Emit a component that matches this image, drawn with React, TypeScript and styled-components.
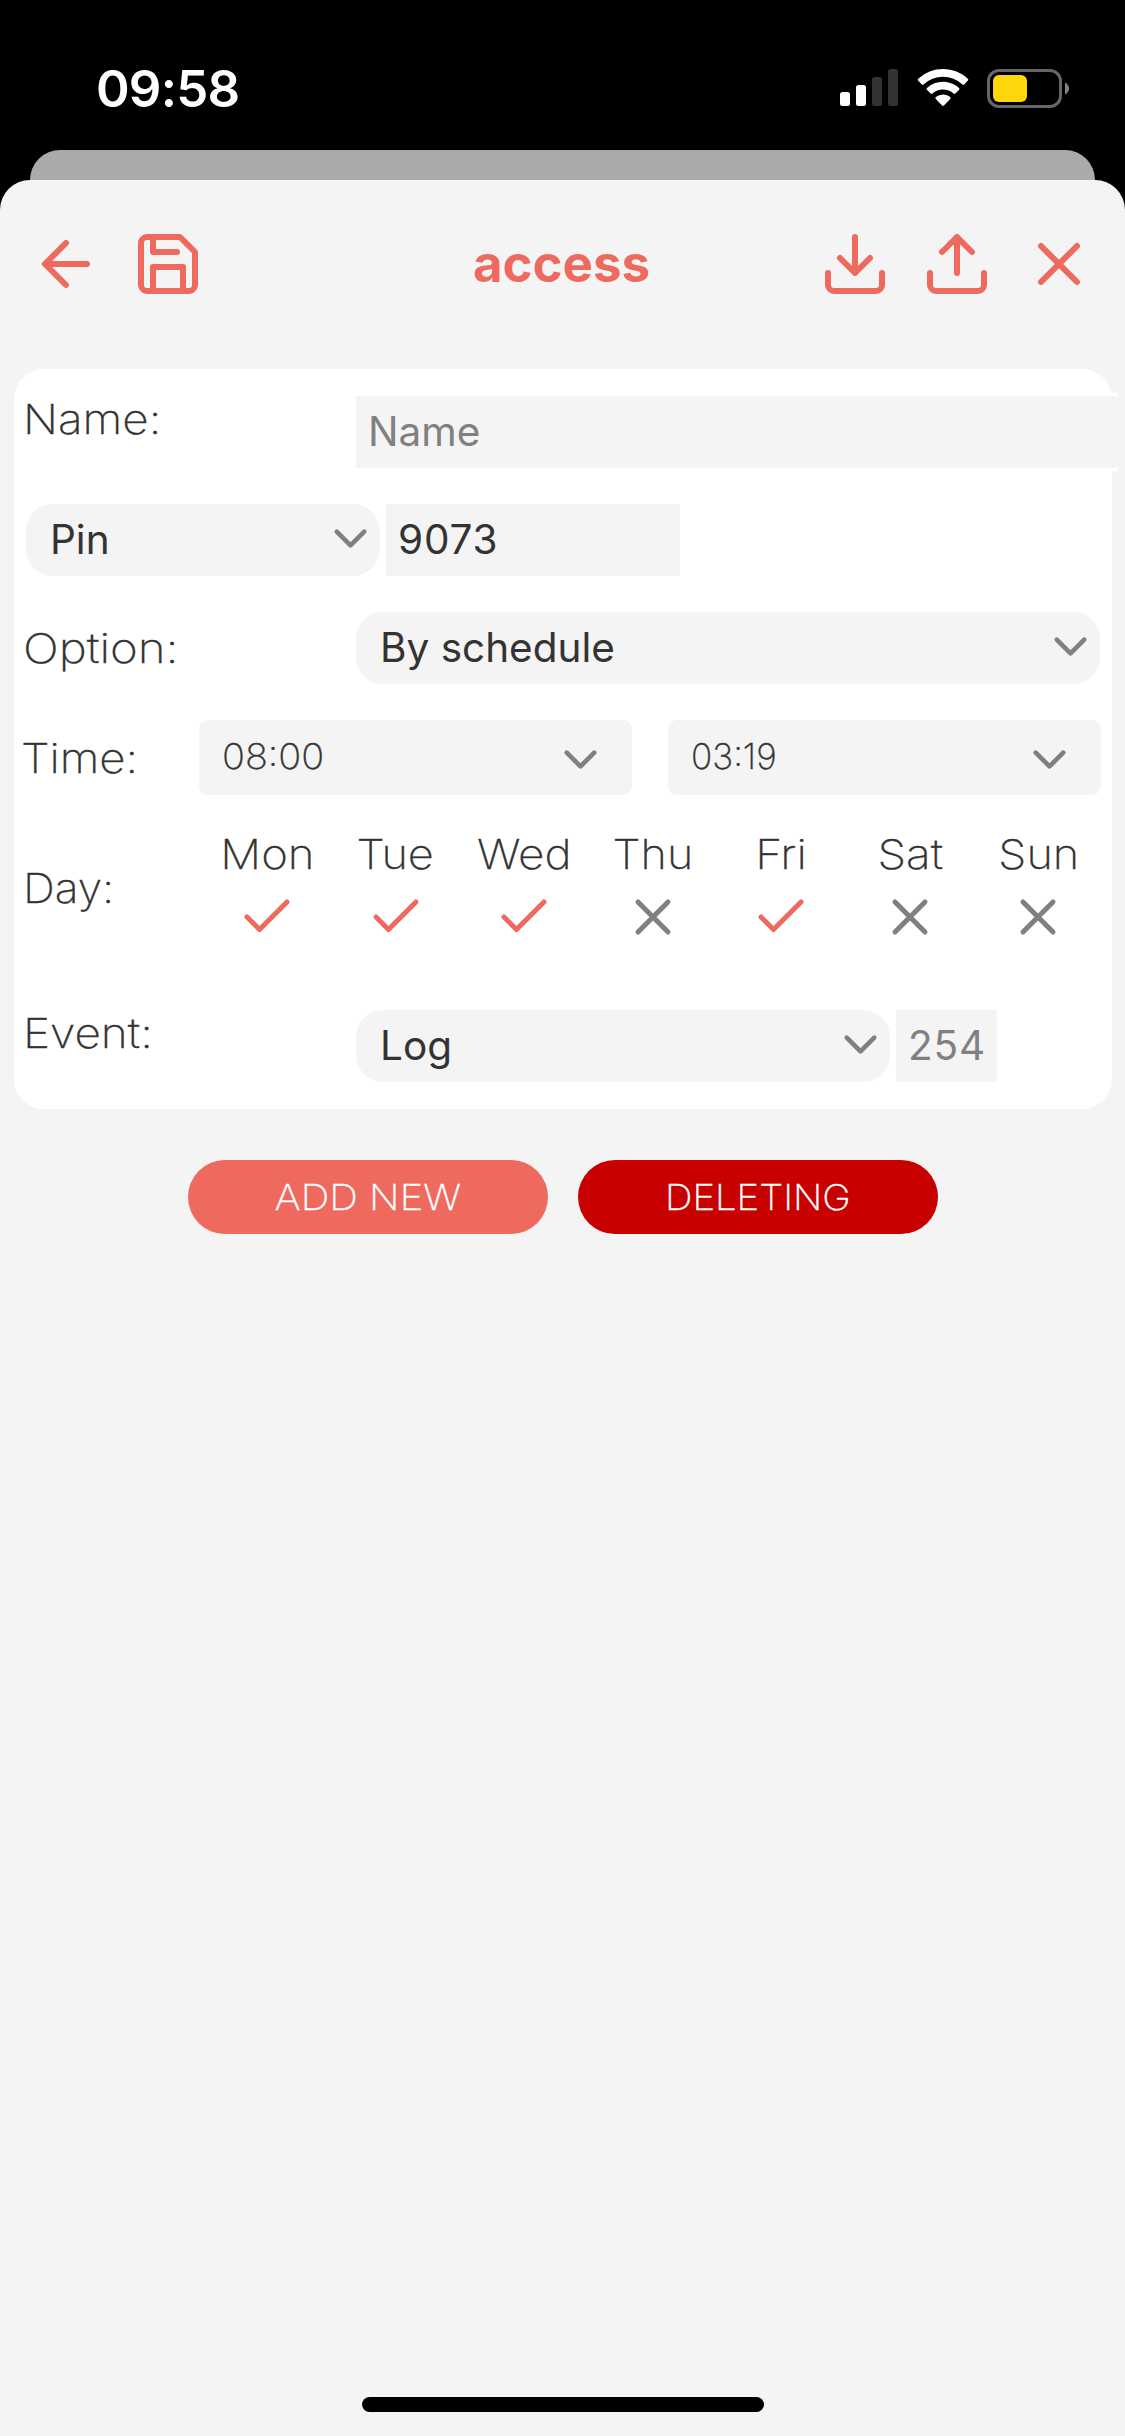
import React from 'react';
import styled, { createGlobalStyle } from 'styled-components';

const coral = '#ee6a5e';
const panel = '#f4f4f4';
const ink = '#333333';
const muted = '#808080';

const GlobalStyle = createGlobalStyle`
  html, body { margin: 0; padding: 0; background: #000; }
  *, *::before, *::after { box-sizing: border-box; }
`;

const Screen = styled.div`
  width: 1125px;
  height: 2436px;
  display: flex;
  flex-direction: column;
  overflow: hidden;
  background: #000;
  color: ${ink};
  font-family: Inter, "Liberation Sans", sans-serif;
`;

const StatusBar = styled.header`
  height: 150px;
  flex: none;
  display: flex;
  align-items: flex-start;
  justify-content: space-between;
  padding: 64px 55px 0 96px;
  color: #fff;
`;

const Clock = styled.span`
  font-size: 51px;
  font-weight: 600;
  line-height: 50px;
  letter-spacing: -0.8px;
`;

const StatusIcons = styled.div`
  display: flex;
  align-items: flex-start;
  gap: 18.5px;
  padding-top: 5px;
`;

const BackSheet = styled.div`
  height: 60px;
  flex: none;
  margin: 0 30px;
  border-radius: 30px 30px 0 0;
  background: #aaaaaa;
`;

const Sheet = styled.main`
  flex: 1;
  margin-top: -30px;
  display: flex;
  flex-direction: column;
  border-radius: 30px 30px 0 0;
  background: ${panel};
`;

const Toolbar = styled.nav`
  height: 189px;
  flex: none;
  display: grid;
  grid-template-columns: 1fr auto 1fr;
  align-items: start;
  padding: 48px 30px 0;
`;

const ToolGroup = styled.div<{ $end?: boolean }>`
  display: flex;
  gap: 30px;
  justify-content: ${p => (p.$end ? 'flex-end' : 'flex-start')};
`;

const Title = styled.h1`
  margin: 0 1px 0 -1px;
  color: ${coral};
  font-size: 51px;
  font-weight: 700;
  line-height: 72px;
`;

const StrokeIcon = styled.svg<{ $size: number; $color: string }>`
  display: block;
  flex: none;
  width: ${p => p.$size}px;
  height: ${p => p.$size}px;
  fill: none;
  stroke: ${p => p.$color};
  stroke-width: 2;
  stroke-linecap: round;
  stroke-linejoin: round;
`;

/* Light text set slightly extended, for labels, day names, times and buttons. */
const Wide = styled.span<{ $stretch: number; $origin?: string }>`
  display: inline-block;
  font-weight: 200;
  transform: scaleX(${p => p.$stretch});
  transform-origin: ${p => p.$origin ?? 'left'} center;
  -webkit-text-stroke: 0.3px currentColor;
  white-space: nowrap;
`;

const Card = styled.section`
  width: 1098px;
  height: 740px;
  flex: none;
  margin-left: 14px;
  padding: 27px 0 0 10px;
  display: flex;
  flex-direction: column;
  border-radius: 30px;
  background: #fff;
`;

const Row = styled.div<{ $height: number; $after?: number; $align?: string; $indent?: number }>`
  height: ${p => p.$height}px;
  flex: none;
  display: flex;
  align-items: ${p => p.$align ?? 'center'};
  margin-bottom: ${p => p.$after ?? 36}px;
  padding-left: ${p => p.$indent ?? 0}px;
`;

const Label = styled.label<{ $width?: number; $shift?: number }>`
  width: ${p => p.$width ?? 332}px;
  flex: none;
  font-size: 41px;
  line-height: 46px;
  text-indent: ${p => p.$shift ?? -1}px;

  span { text-indent: 0; }
`;

const Field = styled.div<{ $width: number; $muted?: boolean; $track?: number }>`
  width: ${p => p.$width}px;
  height: 72px;
  flex: none;
  padding-left: 12px;
  background: ${panel};
  color: ${p => (p.$muted ? muted : ink)};
  font-size: 40.5px;
  line-height: 72px;
  letter-spacing: ${p => p.$track ?? 0}px;
  white-space: nowrap;
`;

const WideField = styled(Field)`
  height: 78px;
  margin-top: -3px;
  border-top: 3px solid #fff;
  border-bottom: 3px solid #fff;
`;

const Select = styled.div<{ $width: number }>`
  width: ${p => p.$width}px;
  height: 72px;
  flex: none;
  display: flex;
  align-items: center;
  justify-content: space-between;
  padding: 0 2px 0 24px;
  border-radius: 27px;
  background: ${panel};
  font-size: 40.5px;
  line-height: 72px;

  svg { margin-top: -4px; }
`;

const Gap = styled.span<{ $width: number }>`
  width: ${p => p.$width}px;
  flex: none;
`;

const TimeSelect = styled.div`
  width: 432.5px;
  height: 75px;
  flex: none;
  display: flex;
  align-items: center;
  justify-content: space-between;
  padding: 0 24px 0 23px;
  border-radius: 9px;
  background: ${panel};
  font-size: 35px;
  line-height: 73px;

  svg { margin-top: 3px; }
  ${Wide} { padding-bottom: 2px; }
`;

const Days = styled.div`
  width: 900px;
  align-self: flex-start;
  display: grid;
  grid-template-columns: repeat(7, 1fr);
`;

const Day = styled.div`
  display: flex;
  flex-direction: column;
  align-items: center;
  gap: 7px;
  padding-top: 5px;
  font-size: 41px;
  line-height: 50px;

  ${Wide} { margin-top: -1px; margin-bottom: 1px; }
`;

const Actions = styled.div`
  display: flex;
  justify-content: center;
  gap: 30px;
  margin-top: 51px;
  padding-left: 1px;
`;

const Action = styled.button<{ $bg: string }>`
  width: 360px;
  height: 74px;
  padding: 0;
  border: 0;
  border-radius: 37px;
  background: ${p => p.$bg};
  color: #fff;
  font: 200 35px/74px Inter, "Liberation Sans", sans-serif;
`;

const HomeIndicator = styled.div`
  width: 402px;
  height: 15px;
  margin: auto auto 24px;
  border-radius: 8px;
  background: #000;
`;

const Icon = ({ d, size = 72, color = coral }: { d: string; size?: number; color?: string }) => (
  <StrokeIcon viewBox="0 0 24 24" $size={size} $color={color}><path d={d} /></StrokeIcon>
);

const paths = {
  back: 'M19 12H5M12 19l-7-7 7-7',
  save: 'M19 21H5a2 2 0 0 1-2-2V5a2 2 0 0 1 2-2h11l5 5v11a2 2 0 0 1-2 2zM17 21v-8H7v8M7 3v5h8',
  download: 'M21 15v4a2 2 0 0 1-2 2H5a2 2 0 0 1-2-2v-4M7 10l5 5 5-5M12 15V3',
  upload: 'M21 15v4a2 2 0 0 1-2 2H5a2 2 0 0 1-2-2v-4M17 8l-5-5-5 5M12 3v12',
  close: 'M18 6L6 18M6 6l12 12',
  check: 'M20 6L9 17l-5-5',
  down: 'M6 9l6 6 6-6',
};

const Chevron = () => <Icon d={paths.down} size={55} color={muted} />;

const days = [
  { name: 'Mon', on: true, stretch: 1.11 },
  { name: 'Tue', on: true, stretch: 1.1 },
  { name: 'Wed', on: true, stretch: 1.12 },
  { name: 'Thu', on: false, stretch: 1.095 },
  { name: 'Fri', on: true, stretch: 1.125 },
  { name: 'Sat', on: false, stretch: 1.12 },
  { name: 'Sun', on: false, stretch: 1.1 },
];

export default function App() {
  return (
    <Screen>
      <GlobalStyle />
      <StatusBar>
        <Clock>09:58</Clock>
        <StatusIcons>
          <svg width="58" height="38" viewBox="840 70 58 38">
            <rect x="840" y="93" width="10" height="14" rx="2.5" fill="#fff" />
            <rect x="856" y="86" width="10" height="21" rx="2.5" fill="#fff" />
            <rect x="872" y="78" width="10" height="29" rx="2.5" fill="#333" />
            <rect x="888" y="70" width="10" height="37" rx="2.5" fill="#333" />
          </svg>
          <svg width="52" height="38" viewBox="916.5 70 52 38" fill="#fff">
            <path d="M942.5 70c9.500 0 18.200 3.600 24.800 9.700.6.5.6 1.300.1 1.900l-3.700 3.800c-.5.500-1.200.500-1.700 0a28.600 28.600 0 0 0-39 0c-.5.500-1.200.500-1.700 0l-3.700-3.800c-.5-.6-.5-1.400.1-1.900A36.500 36.500 0 0 1 942.500 70z" />
            <path d="M942.5 82.700c6.100 0 11.700 2.300 16 6.200.6.500.6 1.300.1 1.900l-3.700 3.700c-.5.500-1.200.500-1.800.1a15.800 15.800 0 0 0-21.200 0c-.6.400-1.300.400-1.800-.1l-3.700-3.700c-.5-.6-.5-1.400.1-1.900a23.800 23.800 0 0 1 16-6.200z" />
            <path d="M942.5 95.500c2.700 0 5.200 1 7.100 2.600.6.500.6 1.300.1 1.800l-6.300 6.600c-.5.500-1.300.500-1.800 0l-6.300-6.600c-.5-.5-.5-1.300.1-1.800a11 11 0 0 1 7.100-2.600z" />
          </svg>
          <svg width="83" height="40" viewBox="987 69 83 40">
            <rect x="988.5" y="70.5" width="72" height="36" rx="10.5" fill="none" stroke="#666" strokeWidth="3" />
            <rect x="993" y="75" width="34" height="27" rx="6" fill="#ffd60a" />
            <path d="M1065 82.500c2.500 1 4 3.400 4 6s-1.500 5-4 6z" fill="#808080" />
          </svg>
        </StatusIcons>
      </StatusBar>
      <BackSheet />
      <Sheet>
        <Toolbar>
          <ToolGroup>
            <Icon d={paths.back} />
            <Icon d={paths.save} />
          </ToolGroup>
          <Title>access</Title>
          <ToolGroup $end>
            <Icon d={paths.download} />
            <Icon d={paths.upload} />
            <Icon d={paths.close} />
          </ToolGroup>
        </Toolbar>
        <Card>
          <Row $height={72} $align="flex-start">
            <Label><Wide $stretch={1.115}>Name:</Wide></Label>
            <WideField $width={762} $muted>Name</WideField>
          </Row>
          <Row $height={72} $indent={2}>
            <Select $width={354}>Pin<Chevron /></Select>
            <Gap $width={6} />
            <Field $width={294} $track={0.8}>9073</Field>
          </Row>
          <Row $height={72}>
            <Label><Wide $stretch={1.155}>Option:</Wide></Label>
            <Select $width={744}>By schedule<Chevron /></Select>
          </Row>
          <Row $height={75} $after={30}>
            <Label $width={175} $shift={-3}><Wide $stretch={1.11}>Time:</Wide></Label>
            <TimeSelect><Wide $stretch={1.085}>08:00</Wide><Chevron /></TimeSelect>
            <Gap $width={36.5} />
            <TimeSelect><Wide $stretch={1.005}>03:19</Wide><Chevron /></TimeSelect>
          </Row>
          <Row $height={125} $after={60}>
            <Label $width={178.7}><Wide $stretch={1.08}>Day:</Wide></Label>
            <Days>
              {days.map(d => (
                <Day key={d.name}>
                  <Wide $stretch={d.stretch} $origin="center">{d.name}</Wide>
                  <Icon d={d.on ? paths.check : paths.close} size={60} color={d.on ? coral : muted} />
                </Day>
              ))}
            </Days>
          </Row>
          <Row $height={72} $align="flex-start" $after={0}>
            <Label><Wide $stretch={1.12}>Event:</Wide></Label>
            <Select $width={534}>Log<Chevron /></Select>
            <Gap $width={6} />
            <Field $width={101} $muted $track={0.8}>254</Field>
          </Row>
        </Card>
        <Actions>
          <Action $bg={coral}><Wide $stretch={1.14} $origin="center">ADD NEW</Wide></Action>
          <Action $bg="#c80000"><Wide $stretch={1.095} $origin="center">DELETING</Wide></Action>
        </Actions>
        <HomeIndicator />
      </Sheet>
    </Screen>
  );
}
